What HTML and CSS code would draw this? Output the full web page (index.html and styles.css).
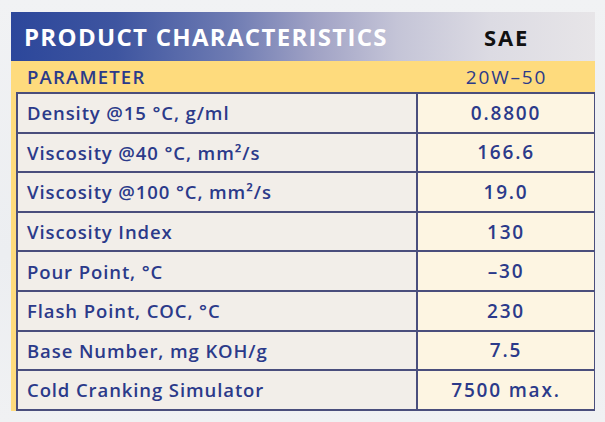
FILE: index.html
```html
<!DOCTYPE html>
<html>
<head>
<meta charset="utf-8">
<link rel="stylesheet" href="styles.css">
</head>
<body>
<div class="sheet">
  <div class="head">
    <div class="title">PRODUCT CHARACTERISTICS</div>
    <div class="sae">SAE</div>
  </div>
  <div class="param">
    <div class="param-name">PARAMETER</div>
    <div class="grade">20W–50</div>
  </div>
  <div class="body">
    <div class="table">
      <div class="row"><div class="name">Density @15 °C, g/ml</div><div class="val">0.8800</div></div>
      <div class="row"><div class="name">Viscosity @40 °C, mm²/s</div><div class="val">166.6</div></div>
      <div class="row"><div class="name">Viscosity @100 °C, mm²/s</div><div class="val">19.0</div></div>
      <div class="row"><div class="name">Viscosity Index</div><div class="val">130</div></div>
      <div class="row"><div class="name">Pour Point, °C</div><div class="val">–30</div></div>
      <div class="row"><div class="name">Flash Point, COC, °C</div><div class="val">230</div></div>
      <div class="row"><div class="name">Base Number, mg KOH/g</div><div class="val">7.5</div></div>
      <div class="row"><div class="name">Cold Cranking Simulator</div><div class="val">7500 max.</div></div>
    </div>
  </div>
</div>
</body>
</html>
```
FILE: styles.css
```css
html, body {
  margin: 0;
  padding: 0;
}
body {
  width: 605px;
  height: 422px;
  overflow: hidden;
  background: linear-gradient(180deg, #f1f2f4 0%, #eceef1 60%, #f0f1f3 100%);
  font-family: "Open Sans", "Liberation Sans", sans-serif;
  color: #2b3a8a;
}
.sheet {
  margin: 12px 0 0 11px;
  width: 584px;
}
.head {
  height: 49px;
  display: grid;
  grid-template-columns: 407px 177px;
  align-items: center;
  background: linear-gradient(90deg, #2c479b 0%, #3e55a0 18%, #6f7cb3 38%, #a0a2c5 52%, #c4c4d7 66%, #dcdbe3 82%, #e7e5e8 100%);
}
.title {
  padding-left: 13px;
  color: #ffffff;
  font-weight: 700;
  font-size: 24px;
  letter-spacing: 1.3px;
}
.sae {
  text-align: center;
  color: #111111;
  font-weight: 700;
  font-size: 22px;
  letter-spacing: 1.8px;
}
.param {
  height: 31px;
  display: grid;
  grid-template-columns: 407px 177px;
  align-items: center;
  background: #fedb7d;
}
.param-name {
  padding-left: 16px;
  font-weight: 600;
  font-size: 18.5px;
  letter-spacing: 1.2px;
}
.grade {
  text-align: center;
  font-weight: 500;
  font-size: 19px;
  letter-spacing: 1.8px;
}
.body {
  background: #fedb7d;
  padding-left: 5px;
}
.table {
  border: 2px solid #4a4e7c;
  border-right-width: 1.5px;
  background: #f2eee9;
}
.row {
  display: grid;
  grid-template-columns: 400px 1fr;
  height: 37.6px;
}
.row + .row {
  border-top: 2px solid #4a4e7c;
}
.name {
  display: flex;
  align-items: center;
  padding-left: 9px;
  font-weight: 600;
  font-size: 18.5px;
  letter-spacing: 0.9px;
  border-right: 2px solid #4a4e7c;
}
.val {
  display: flex;
  align-items: center;
  justify-content: center;
  background: #fdf5e2;
  font-weight: 600;
  font-size: 19px;
  letter-spacing: 1.8px;
}
```
